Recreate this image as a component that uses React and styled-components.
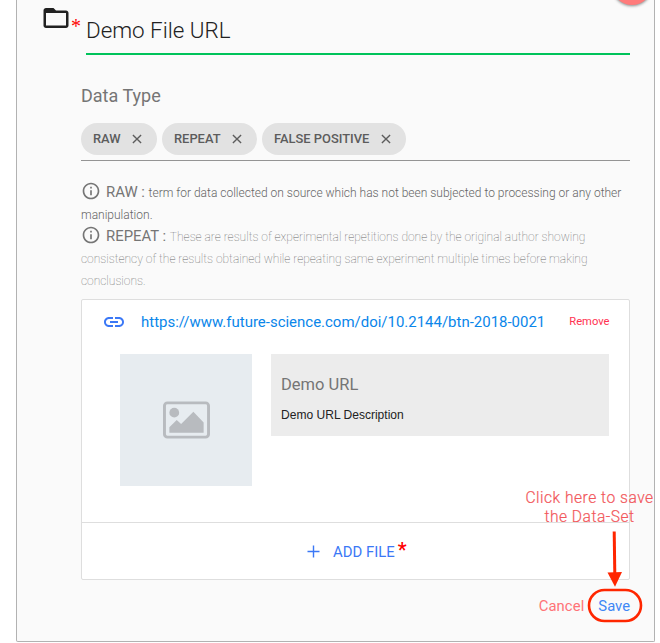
import React from "react";
import styled, { createGlobalStyle } from "styled-components";

const Global = createGlobalStyle`
  * { box-sizing: border-box; }
  body { margin: 0; background: #fff; font-family: Roboto, sans-serif; overflow: hidden; }
`;

const Page = styled.div`
  position: relative;
  width: 660px;
  height: 643px;
  padding-left: 16px;
  overflow: hidden;
`;

const Panel = styled.main`
  width: 639px;
  height: 642px;
  background: #fafafa;
  border: 1px solid #b2b2b2;
  border-top: 0;
  border-radius: 0 0 2px 2px;
  padding: 0 24px 0 64px;
`;

const TitleRow = styled.header`
  display: flex;
  height: 55px;
  margin-left: -40px;
`;

const FolderIcon = styled.svg`
  flex: none;
  width: 30px;
  height: 30px;
  margin: 3px 0 0;
  fill: #212121;
`;

const TitleStar = styled.span`
  width: 14px;
  margin-top: 16px;
  margin-right: 1px;
  font: 20px/20px "Liberation Serif", serif;
  color: #f00;
`;

const TitleInput = styled.div`
  flex: 1;
  border-bottom: 2px solid #00c35a;
  padding-top: 16px;
  font-size: 22.4px;
  line-height: 28px;
  font-weight: 300;
  color: #212121;
  white-space: nowrap;
`;

const Label = styled.h2`
  margin: 29px 0 0;
  font-size: 18px;
  line-height: 24px;
  font-weight: 400;
  color: #757575;
`;

const Chips = styled.div`
  display: flex;
  gap: 5px;
  height: 38px;
  margin-top: 15px;
  border-bottom: 1px solid #949494;
`;

const Chip = styled.div`
  display: flex;
  align-items: center;
  justify-content: space-between;
  width: ${(p) => p.$width}px;
  height: 32px;
  padding: 0 15px 1px 12px;
  border-radius: 16px;
  background: #e2e2e2;
  font-size: 12.9px;
  font-weight: 500;
  color: #5c5c5c;
  white-space: nowrap;
`;

const CloseIcon = styled.svg`
  width: 10px;
  height: 10px;
  margin-top: 1px;
  stroke: #5c5c5c;
  stroke-width: 1.5;
`;

const Notes = styled.section`
  padding-top: 21px;
  height: 138px;
`;

const Note = styled.p`
  margin: 0;
  font-size: 12px;
  line-height: 22px;
  font-weight: ${(p) => p.$weight};
  color: #666;
  white-space: nowrap;
`;

const NoteTerm = styled.span`
  font-size: 14.9px;
  line-height: 20px;
  font-weight: 400;
  color: #757575;
`;

const InfoIcon = styled.svg`
  width: 20px;
  height: 20px;
  margin: -2px 5px -2px 0;
  vertical-align: -2px;
  fill: #757575;
`;

const Card = styled.section`
  width: 549px;
  height: 281px;
  background: #fff;
  border: 1px solid #dedede;
  border-radius: 2px;
`;

const LinkRow = styled.div`
  display: flex;
  align-items: center;
  height: 44px;
  padding: 0 19.5px 0 20px;
`;

const LinkIcon = styled.svg`
  width: 24px;
  height: 24px;
  margin-right: 15px;
  fill: #3b78f6;
`;

const Url = styled.a`
  font-size: 14.97px;
  color: #0a86ea;
  white-space: nowrap;
`;

const Remove = styled.button`
  margin-left: auto;
  padding: 0;
  margin-top: -1px;
  border: 0;
  background: none;
  font: 11.2px Roboto, sans-serif;
  color: #ff3352;
`;

const Preview = styled.div`
  display: flex;
  gap: 19px;
  height: 179px;
  padding: 10px 20px 0 38px;
  border-bottom: 1px solid #dedede;
`;

const Thumb = styled.div`
  flex: none;
  display: grid;
  place-items: center;
  width: 132px;
  height: 132px;
  background: #e7ecf0;
`;

const Details = styled.div`
  flex: 1;
  height: 82px;
  padding: 21px 10px;
  background: #ececec;
`;

const DetailTitle = styled.div`
  font-size: 16.5px;
  line-height: 20px;
  color: #757575;
`;

const DetailText = styled.div`
  margin-top: 12px;
  font: 12.05px/17px "Liberation Sans", sans-serif;
  color: #222;
`;

const AddFile = styled.button`
  display: flex;
  align-items: center;
  width: 100%;
  height: 56px;
  padding: 2px 0 0 225px;
  border: 0;
  background: none;
  font: 14.9px Roboto, sans-serif;
  color: #3b78f6;
`;

const PlusIcon = styled.svg`
  width: 13px;
  height: 13px;
  margin: -1px 13px 0 0;
  stroke: #3b78f6;
  stroke-width: 1.4;
`;

const AddStar = styled.span`
  margin: -4px 0 0 3px;
  font-size: 20px;
  line-height: 20px;
  font-weight: 500;
  color: #f00;
`;

const Actions = styled.footer`
  display: flex;
  justify-content: flex-end;
  gap: 14px;
  margin-top: 16px;
`;

const Action = styled.button`
  padding: 0;
  border: 0;
  background: none;
  font: 14.8px/20px Roboto, sans-serif;
  letter-spacing: ${(p) => p.$spacing || 0}px;
  color: ${(p) => p.$color};
`;

const FloatingButton = styled.div`
  position: absolute;
  left: 612px;
  top: -35px;
  width: 40px;
  height: 40px;
  border-radius: 50%;
  background: #ff7b7b;
  box-shadow: 0 1px 3px rgba(0, 0, 0, 0.45);
`;

const Callout = styled.div`
  position: absolute;
  left: 519px;
  top: 489px;
  width: 141px;
  font: 300 15.6px/19px Roboto, sans-serif;
  letter-spacing: 0.5px;
  -webkit-text-stroke: 0.2px #f2575b;
  text-align: center;
  color: #f2575b;
  white-space: nowrap;
`;

const Marker = styled.svg`
  position: absolute;
  left: 584px;
  top: 528px;
`;

const Close = () => (
  <CloseIcon viewBox="0 0 11 11"><path d="M1 1l9 9M10 1l-9 9" /></CloseIcon>
);

const Info = () => (
  <InfoIcon viewBox="0 0 24 24">
    <path d="M11 17h2v-6h-2v6zm1-15C6.48 2 2 6.48 2 12s4.48 10 10 10 10-4.48 10-10S17.52 2 12 2zm0 18c-4.41 0-8-3.59-8-8s3.59-8 8-8 8 3.59 8 8-3.59 8-8 8zM11 9h2V7h-2v2z" />
  </InfoIcon>
);

const tags = [["RAW", 76], ["REPEAT", 95], ["FALSE POSITIVE", 144]];

export default function App() {
  return (
    <Page>
      <Global />
      <Panel>
        <TitleRow>
          <FolderIcon viewBox="0 0 24 24">
            <path d="M20 6h-8l-2-2H4c-1.1 0-1.99.9-1.99 2L2 18c0 1.1.9 2 2 2h16c1.1 0 2-.9 2-2V8c0-1.1-.9-2-2-2zm0 12H4V8h16v10z" />
          </FolderIcon>
          <TitleStar>*</TitleStar>
          <TitleInput>Demo File URL</TitleInput>
        </TitleRow>
        <Label>Data Type</Label>
        <Chips>
          {tags.map(([name, width]) => (
            <Chip key={name} $width={width}>{name}<Close /></Chip>
          ))}
        </Chips>
        <Notes>
          <Note $weight={300}>
            <Info /><NoteTerm>RAW : </NoteTerm>
            term for data collected on source which has not been subjected to processing or any other
            <br />manipulation.
          </Note>
          <Note $weight={100}>
            <Info /><NoteTerm>REPEAT : </NoteTerm>
            These are results of experimental repetitions done by the original author showing
            <br />consistency of the results obtained while repeating same experiment multiple times before making
            <br />conclusions.
          </Note>
        </Notes>
        <Card>
          <LinkRow>
            <LinkIcon viewBox="0 0 24 24">
              <path d="M3.9 12c0-1.71 1.39-3.1 3.1-3.1h4V7H7c-2.76 0-5 2.24-5 5s2.24 5 5 5h4v-1.9H7c-1.71 0-3.1-1.39-3.1-3.1zM8 13h8v-2H8v2zm9-6h-4v1.9h4c1.71 0 3.1 1.39 3.1 3.1s-1.39 3.1-3.1 3.1h-4V17h4c2.76 0 5-2.24 5-5s-2.24-5-5-5z" />
            </LinkIcon>
            <Url>https://www.future-science.com/doi/10.2144/btn-2018-0021</Url>
            <Remove>Remove</Remove>
          </LinkRow>
          <Preview>
            <Thumb>
              <svg width="47" height="38" viewBox="0 0 48 38">
                <rect x="1.5" y="1.5" width="45" height="35" rx="3" fill="none" stroke="#b8bbbf" strokeWidth="3" />
                <circle cx="11.5" cy="11.5" r="5" fill="#b8bbbf" />
                <path d="M6.5 32v-5.5l7.5-7.5 4.5 4L31 10.5l10.5 11V32z" fill="#b8bbbf" />
              </svg>
            </Thumb>
            <Details>
              <DetailTitle>Demo URL</DetailTitle>
              <DetailText>Demo URL Description</DetailText>
            </Details>
          </Preview>
          <AddFile>
            <PlusIcon viewBox="0 0 13 13"><path d="M6.5 .5v12M.5 6.5h12" /></PlusIcon>
            ADD FILE<AddStar>*</AddStar>
          </AddFile>
        </Card>
        <Actions>
          <Action $color="#ff7377" $spacing={0.1}>Cancel</Action>
          <Action $color="#4087f5">Save</Action>
        </Actions>
      </Panel>
      <FloatingButton />
      <Callout>Click here to save<br />the Data-Set</Callout>
      <Marker width="62" height="98" viewBox="0 0 62 98" fill="none" stroke="#ff2600">
        <path d="M30.2 3.5L30.8 46" strokeWidth="3" />
        <path d="M23.5 44.5l14.5-.4-7 14.6z" fill="#ff2600" stroke="none" />
        <rect x="5" y="62" width="52" height="31" rx="15.5" strokeWidth="2.6" />
      </Marker>
    </Page>
  );
}
